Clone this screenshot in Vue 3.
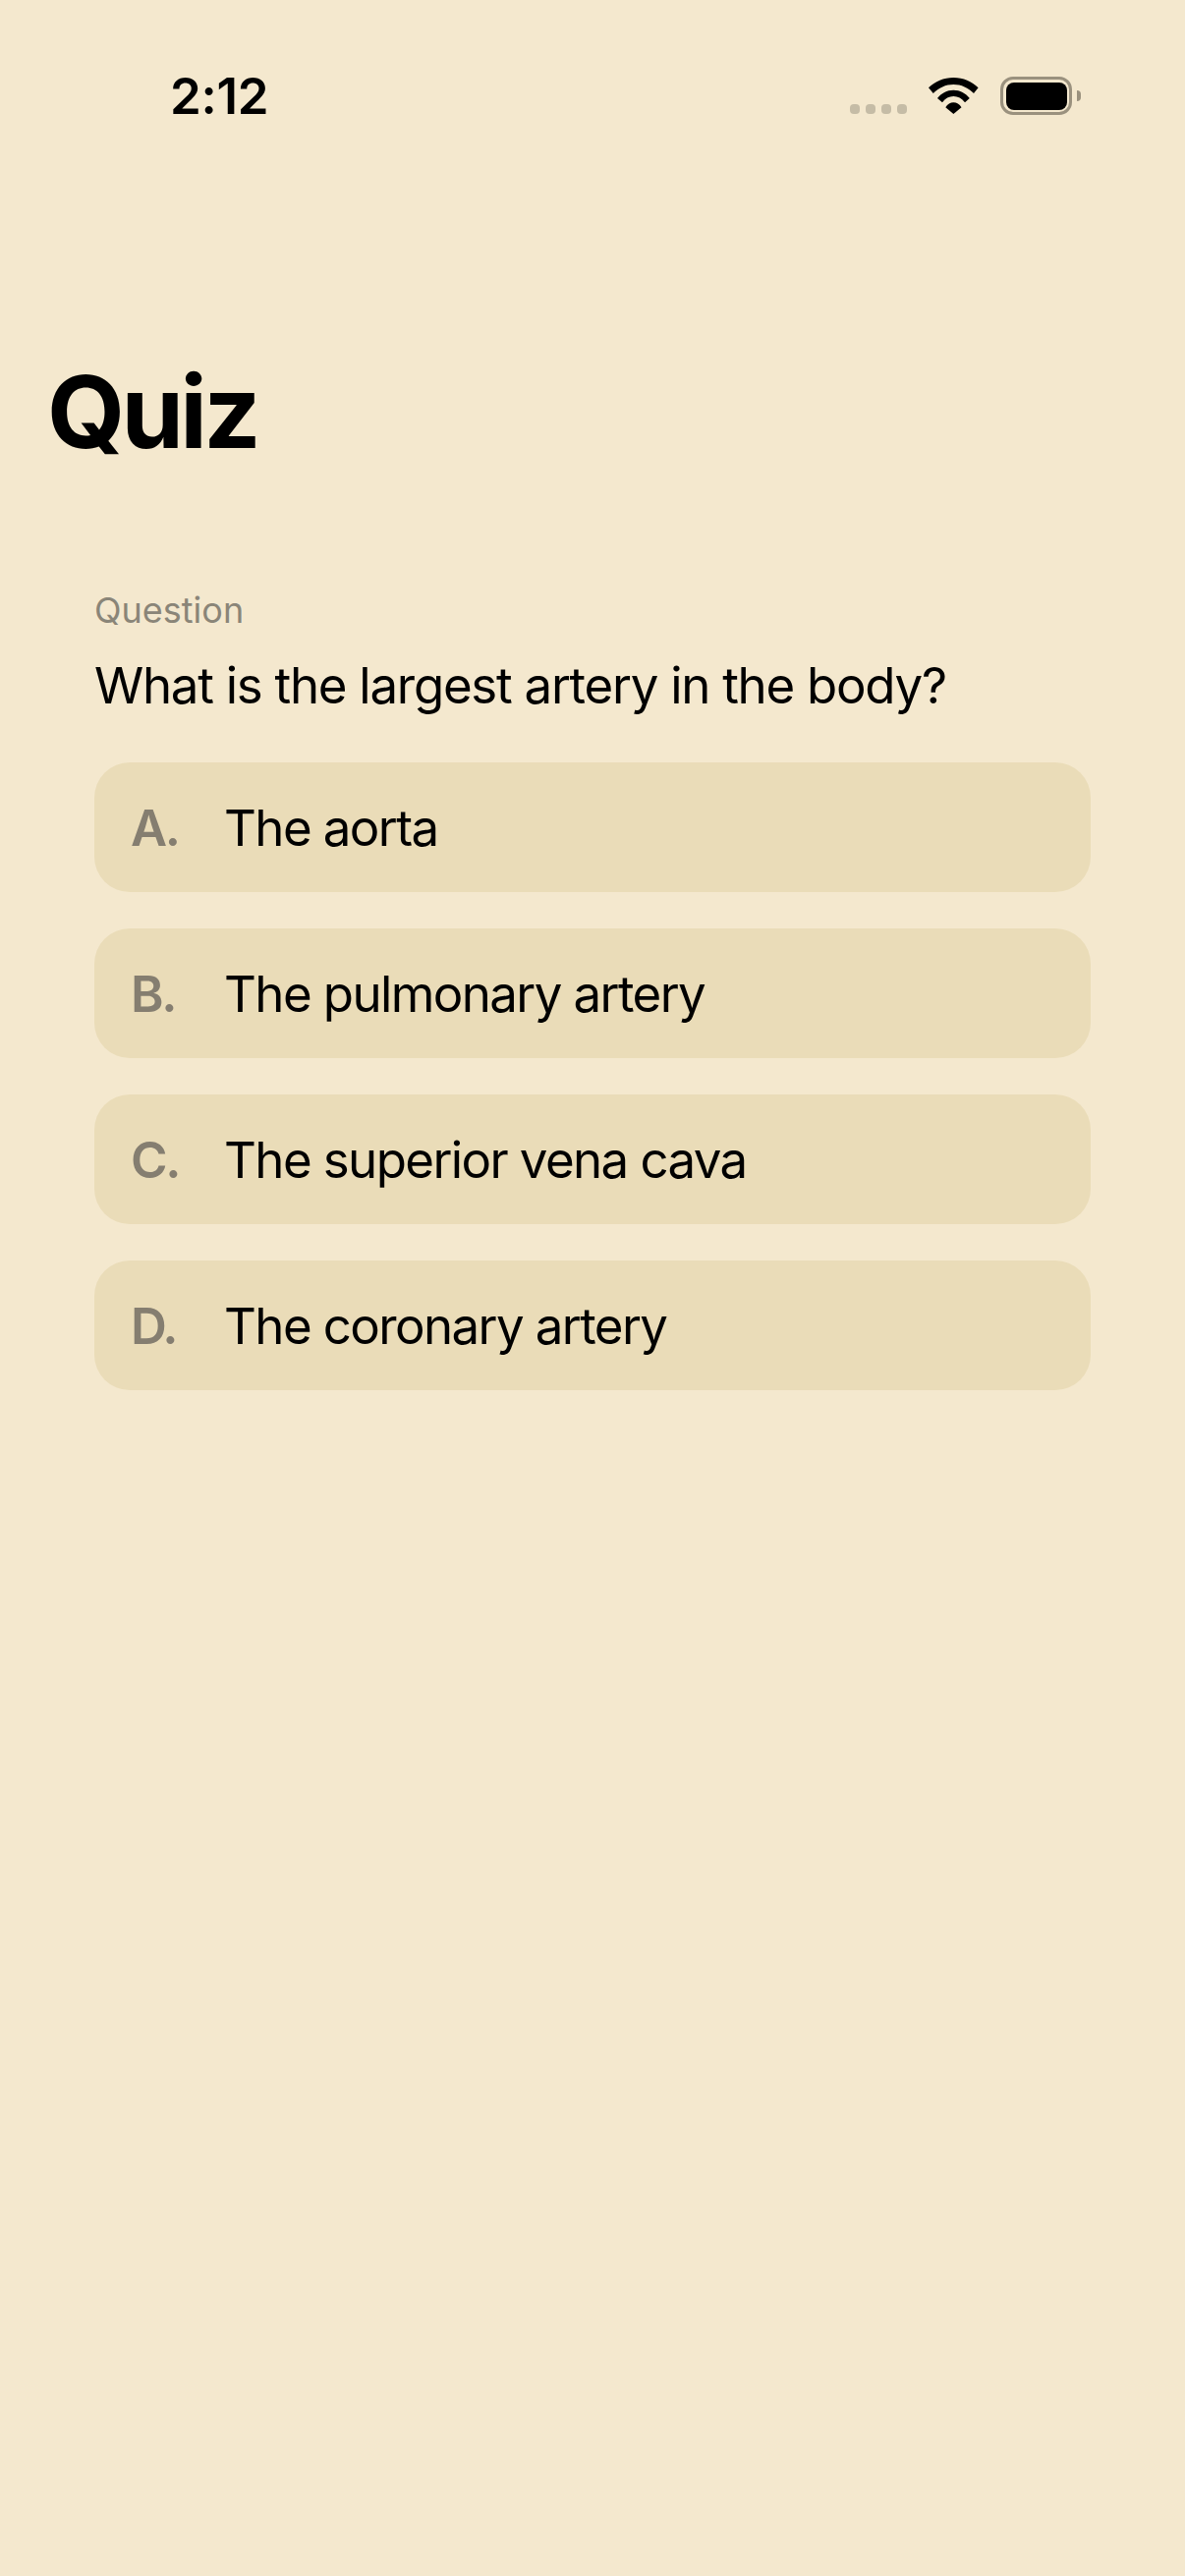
<template>
  <div class="screen">
    <!-- status bar -->
    <div class="status-bar">
      <span class="time">2:12</span>
      <div class="status-icons">
        <div class="signal">
          <span v-for="n in 4" :key="n" class="dot"></span>
        </div>
        <svg class="wifi" width="51" height="37" viewBox="0 0 51 37">
          <path d="M0 10.3 C6.8 3.8 15.4 0 25.4 0 C35.4 0 44 3.8 50.6 10.3 L46 16 C40.4 10.4 33.4 7 25.4 7 C17.4 7 10.4 10.4 4.8 16 Z" />
          <path d="M9 21 C13 15.8 18.8 12.7 25.4 12.7 C32 12.7 37.8 15.8 41.8 21 L37 25.2 C33.8 21 30 18.9 25.4 18.9 C20.8 18.9 17 21 14 25.2 Z" />
          <path d="M17.3 30.3 C19.4 27 22.2 25.3 25.4 25.3 C28.6 25.3 31.4 27 33.5 30.3 L25.4 37 Z" />
        </svg>
        <div class="battery">
          <div class="battery-body"><div class="battery-fill"></div></div>
          <div class="battery-cap"></div>
        </div>
      </div>
    </div>

    <h1 class="title">Quiz</h1>

    <div class="quiz">
      <p class="label">Question</p>
      <p class="question">What is the largest artery in the body?</p>
      <div class="answers">
        <div v-for="a in answers" :key="a.letter" class="answer">
          <span class="letter">{{ a.letter }}.</span>
          <span class="answer-text">{{ a.text }}</span>
        </div>
      </div>
    </div>
  </div>
</template>

<script setup>
const answers = [
  { letter: "A", text: "The aorta" },
  { letter: "B", text: "The pulmonary artery" },
  { letter: "C", text: "The superior vena cava" },
  { letter: "D", text: "The coronary artery" },
];
</script>

<style>
html,
body {
  margin: 0;
  background: #f4e8ce;
}
</style>

<style scoped>
.screen {
  height: 2622px;
  background: #f4e8ce;
  color: #000;
  font-family: Inter, "Liberation Sans", sans-serif;
  overflow: hidden;
}

.status-bar {
  display: flex;
  justify-content: space-between;
  height: 196px;
  padding: 66px 0 0 173px;
  box-sizing: border-box;
}

.time {
  font-size: 51px;
  line-height: 64px;
  font-weight: 600;
  letter-spacing: -0.3px;
}

.status-icons {
  display: flex;
  align-items: flex-start;
  padding-right: 106px;
}

.signal {
  display: flex;
  gap: 6px;
  margin-top: 40px;
  margin-right: 22px;
}

.dot {
  width: 10px;
  height: 10px;
  border-radius: 4px;
  background: #c5bca6;
}

.wifi {
  margin-top: 13px;
  margin-right: 22px;
  fill: #000;
}

.battery {
  display: flex;
  align-items: center;
  margin-top: 12px;
}

.battery-body {
  width: 73px;
  height: 39px;
  border: 3px solid #9a917e;
  border-radius: 13px;
  padding: 2.5px;
  box-sizing: border-box;
}

.battery-fill {
  width: 100%;
  height: 100%;
  background: #000;
  border-radius: 8px;
}

.battery-cap {
  width: 4px;
  height: 11px;
  background: #9a917e;
  border-radius: 0 5px 5px 0;
  margin-left: 5px;
}

.title {
  margin: 161px 0 0 48px;
  font-size: 102px;
  line-height: 124px;
  font-weight: 700;
  letter-spacing: -3.7px;
}

.quiz {
  padding: 0 96px;
  margin-top: 118px;
}

.label {
  margin: 0;
  font-size: 36px;
  line-height: 44px;
  color: #8a8578;
}

.question {
  margin: 24px 0 0;
  font-size: 51px;
  line-height: 62px;
  letter-spacing: -1.27px;
}

.answers {
  display: flex;
  flex-direction: column;
  gap: 37px;
  margin-top: 47px;
}

.answer {
  display: flex;
  align-items: center;
  height: 132px;
  padding-left: 37px;
  border-radius: 36px;
  background: #eadcb8;
  box-sizing: border-box;
}

.letter {
  width: 95px;
  font-size: 51px;
  font-weight: 600;
  letter-spacing: -2.3px;
  color: #857e70;
}

.answer-text {
  font-size: 51px;
  letter-spacing: -1.6px;
}
</style>
